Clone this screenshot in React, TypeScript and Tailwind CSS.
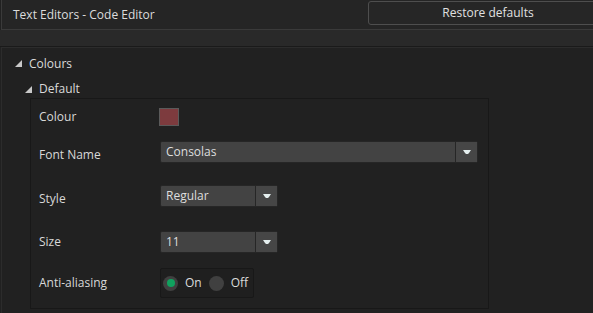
import React from "react";

function Tri() {
  return (
    <svg width="7" height="7" viewBox="0 0 7 7" className="shrink-0">
      <polygon points="7,0 7,7 0,7" fill="#c9c9c9" />
    </svg>
  );
}

function Arrow() {
  return (
    <svg width="8" height="5" viewBox="0 0 8 5">
      <polygon points="0,0 8,0 6,3 5,4 3,4 2,3" fill="#e4eeee" />
    </svg>
  );
}

function Dropdown({ value, width }: { value: string; width: string }) {
  return (
    <div className={`flex h-[22px] ${width} rounded-[2px] border border-[#262626] bg-[#434343]`}>
      <div className="flex flex-1 items-center pl-[5px] text-[12px] text-[#dedede]">{value}</div>
      <div className="flex w-[22px] items-center justify-center border-l border-[#262626] bg-[#464646]">
        <Arrow />
      </div>
    </div>
  );
}

export default function App() {
  return (
    <div
      className="w-[593px] h-[313px] overflow-hidden bg-[#212121] text-[12px] text-[#d8d8d8]"
      style={{ fontFamily: '"Open Sans", "Noto Sans", sans-serif' }}
    >
      <div className="ml-[1px] flex h-[30px] overflow-hidden border-b border-l border-[#3a3a3a] bg-[#252525]">
        <div className="flex h-[29px] w-[366px] shrink-0 items-center pl-[11px] text-[#dcdcdc]">Text Editors - Code Editor</div>
        <div className="mt-[1px] flex h-[24px] w-[240px] shrink-0 items-center justify-center rounded-[3px] border border-[#4e4e4e] bg-[#262626] text-[#e0e0e0]">
          Restore defaults
        </div>
      </div>
      <div className="h-[17px] border-b border-[#1a1a1a] bg-[#292929]" />
      <div className="ml-[1px] h-[270px] border-l border-t border-[#2c2c2c] bg-[#212121]">
        <div className="flex h-[31px] items-center gap-[7px] pl-[13px]">
          <Tri />
          <span className="text-[#dadada]">Colours</span>
        </div>
        <div className="flex h-[18px] items-center gap-[7px] pl-[23px] pt-[2px]">
          <Tri />
          <span className="text-[#dadada]">Default</span>
        </div>
        <div className="ml-[28px] mt-[1px] h-[211px] w-[459px] border border-[#181818] bg-[#212121] pl-[8px] pt-[9px]">
          <div className="flex h-[18px] items-center">
            <div className="w-[120px]">Colour</div>
            <div className="h-[18px] w-[20px] border border-[#5a5a5a] bg-[#7d3b3e]" />
          </div>
          <div className="mt-[15px] flex h-[22px] items-center">
            <div className="w-[121px] pt-[6px]">Font Name</div>
            <Dropdown value="Consolas" width="w-[318px]" />
          </div>
          <div className="mt-[22px] flex h-[22px] items-center">
            <div className="w-[121px] pt-[6px]">Style</div>
            <Dropdown value="Regular" width="w-[118px]" />
          </div>
          <div className="mt-[24px] flex h-[22px] items-center">
            <div className="w-[121px]">Size</div>
            <Dropdown value="11" width="w-[118px]" />
          </div>
          <div className="mt-[15px] flex h-[30px] items-center">
            <div className="w-[121px]">Anti-aliasing</div>
            <div className="flex h-[30px] w-[94px] items-center rounded-[2px] border border-[#181818] bg-[#1f1f1f] pl-[2px]">
              <div className="flex h-[15px] w-[15px] items-center justify-center rounded-full bg-[#404040]">
                <div className="h-[8px] w-[8px] rounded-full bg-[#10a15e]" />
              </div>
              <span className="ml-[7px] text-[#dcdcdc]">On</span>
              <div className="ml-[7px] h-[15px] w-[15px] rounded-full bg-[#404040]" />
              <span className="ml-[7px] text-[#dcdcdc]">Off</span>
            </div>
          </div>
        </div>
      </div>
    </div>
  );
}
